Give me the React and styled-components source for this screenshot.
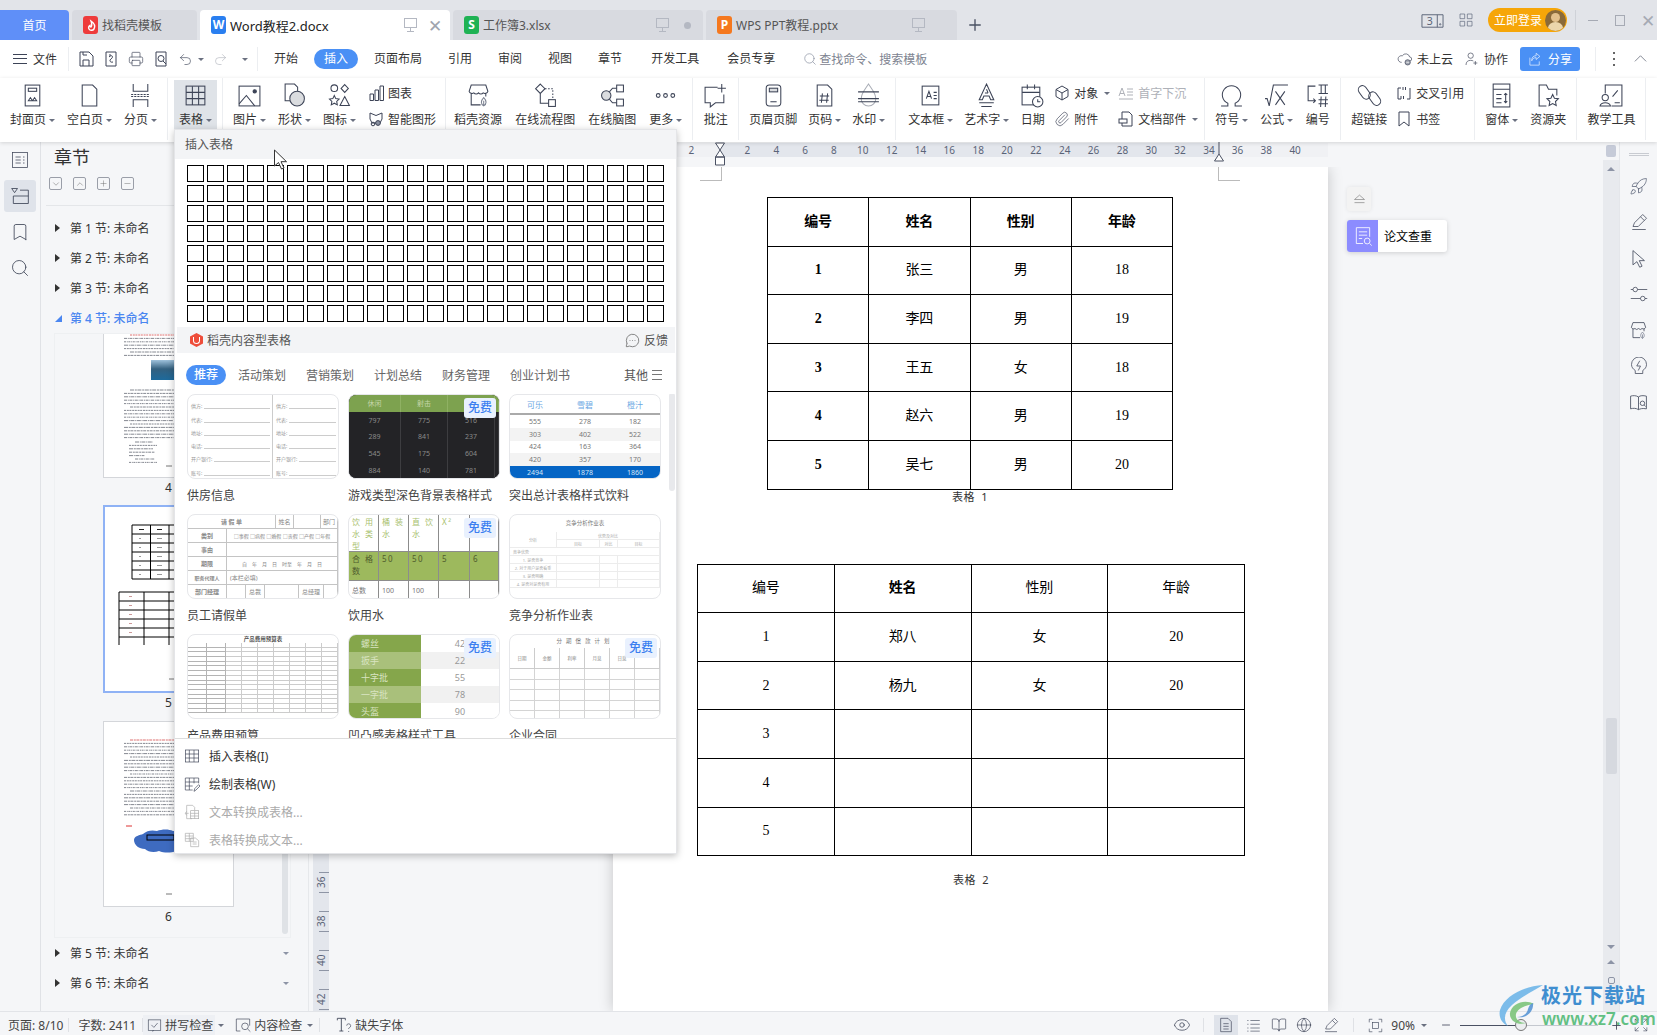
import React from 'react';
import styled, { createGlobalStyle } from 'styled-components';
import { Rocket, Eye, Globe, Search, Undo2, Redo2, Printer, Paperclip, Bookmark, Plus, Minus, BookOpen, MessageCircleMore, ChevronDown, ChevronUp } from 'lucide-react';

const FONT = `"Noto Sans", "Noto Sans CJK SC", sans-serif`;
const DOC_FONT = `"Liberation Serif", serif`;
const CN_FONT = `"Noto Sans CJK SC", sans-serif`;
const INK = '#3c4356';

const GlobalStyle = createGlobalStyle`
  html, body { margin: 0; padding: 0; background: #f5f6f8; overflow: hidden; }
  * { box-sizing: border-box; }
  body { font-family: ${FONT}; font-size: 12px; color: #333; }
`;

const Shell = styled.div`
  position: relative;
  width: 1657px;
  height: 1035px;
  display: flex;
  flex-direction: column;
  overflow: hidden;
`;
const Gap = styled.span`
  width: ${(p) => p.$w}px;
  flex-shrink: 0;
`;

/* drawn icons */
const Svg = styled.svg.attrs((p) => ({ viewBox: p.$box || '0 0 24 24', fill: 'none' }))`
  width: ${(p) => p.$s || 24}px;
  height: ${(p) => p.$s || 24}px;
  stroke: ${(p) => p.$c || INK};
  stroke-width: ${(p) => p.$w || 1};
  flex-shrink: 0;
  text { stroke: none; fill: ${(p) => p.$c || INK}; font-family: ${FONT}; }
`;

const ICONS = {
  cover: <><rect x="5" y="2" width="14" height="20" /><rect x="8" y="5" width="8" height="3" /><path d="M8 17l2-3 2 3zM12 17l2-3 2 3z" /></>,
  blank: <path d="M5 2h10l4 4v16H5z" />,
  pagebreak: <><path d="M5 1v7h14V1M5 23v-7h14v7" /><path d="M3 11h18" strokeDasharray="2 1" /><path d="M3 13h18" strokeDasharray="2 1" /></>,
  table: <><rect x="3" y="3" width="18" height="18" /><path d="M3 9h18M3 15h18M9 3v18M15 3v18" /></>,
  picture: <><rect x="2" y="3" width="20" height="19" /><path d="M2 20l7-8 8 10" /><circle cx="17" cy="8" r="1.6" fill={INK} /></>,
  shape: <><path d="M8 17H3V1h9l3 3v4" /><circle cx="14.5" cy="15" r="7" fill="#dadcdf" /></>,
  iconset: <><circle cx="7" cy="5" r="3.2" /><path d="M17 1.5l3.5 3.7L17 9l-3.5-3.8z" /><path d="M7 12l1.4 3 3.2.4-2.3 2.3.6 3.3L7 19.4 4.1 21l.6-3.3-2.3-2.3 3.2-.4zM17 13l4.5 8.5h-9z" /></>,
  chart: <path d="M2 9h3.5v6.5H2zM7 5h3.5v10.5H7zM12 1h3.5v14.5H12z" />,
  smart: <><path d="M2 2l6 2.5L14 2v6l-2 4H4L2 8z" /><circle cx="10" cy="12" r="2.4" fill="#8a90a0" /><circle cx="5" cy="13" r="1.8" /></>,
  shop: <><path d="M5 10v11h9M19 10v3M3 8l2-6h14l2 6a3 3 0 0 1-4.5 1.5A3 3 0 0 1 12 9.5a3 3 0 0 1-4.5 0A3 3 0 0 1 3 8z" /><path d="M17 22c-3-2-3-5 0-8 3 3 3 6 0 8zM17 22v-5" stroke="#7a8090" /></>,
  flow: <><path d="M7 1l4.500 4.500L7 10 2.500 5.500z" /><rect x="15" y="16" width="6.500" height="6.500" /><path d="M11.500 5.500H19V16" strokeDasharray="1.500 1.500" /><path d="M7 10v9.500h8" /></>,
  mind: <><circle cx="6" cy="12" r="4.500" fill="#dadcdf" /><rect x="16" y="2" width="6.500" height="6.500" /><rect x="16" y="15.500" width="6.500" height="6.500" /><path d="M9 8.500l3-3.500h4M9 15.500l3 3.500h4" /></>,
  more: <><circle cx="5" cy="12" r="1.800" /><circle cx="12" cy="12" r="1.800" /><circle cx="19" cy="12" r="1.800" /></>,
  comment: <path d="M14 4H2v15h5v4l5-4h8v-8M18 1v8M14 5h8" />,
  header: <><rect x="5" y="2" width="14" height="20" rx="3" /><rect x="8" y="5" width="8" height="3.500" fill="#dadcdf" /><path d="M9 18h6" /></>,
  pagenum: <><path d="M5 2h10l4 4v16H5z" /><path d="M10 10l-1 9M15 10l-1 9M7.500 12.500h9M7 16.500h9" /></>,
  watermark: <><path d="M12 1c4 6 7 9 7 14a7 7 0 0 1-14 0c0-5 3-8 7-14z" stroke="#a9adb6" /><path d="M2 8.500h20M2 15h20M2 18h20" /></>,
  textbox: <><rect x="4" y="3" width="16" height="18" /><path d="M8 15l2.500-7 2.500 7M9 13h3M15 9h3M15 12h3M15 15h3" /></>,
  art: <><path d="M12 1l7 15h-3l-1.500-3.500h-5L8 16H5zM10.500 9.500h3M12 6l1.500 3.500" /><path d="M5 19h14M7 22.500h10" /></>,
  date: <><rect x="2" y="4" width="17" height="17" /><path d="M2 9h17M7 1.500V6M14 1.500V6" /><circle cx="17" cy="18" r="5" fill="#fff" /><path d="M17 15.500V18h2.500" /></>,
  object: <><path d="M8 1l6 3.500v7L8 15l-6-3.500v-7z" /><path d="M2 4.500L8 8l6-3.500M8 8v7" /></>,
  dropcap: <path d="M1 11l3-8 3 8M2 8.500h4M9 4h6M9 7h6M9 10h6M1 14h14" />,
  docpart: <><path d="M4 8V1h7l3 3v11H4v-3" /><rect x="1" y="8" width="8" height="4" /></>,
  omega: <path d="M2 22h6.500v-2.500a8.800 8.800 0 1 1 7 0V22H22" />,
  formula: <path d="M1 15h2l2 7 4-20h14M11 8l9 13M20 8l-9 13" />,
  numbering: <path d="M10 3H3v14h7M8 15l2 2-2 2M13 2h9M13 10h9M15.500 2v8M19.500 2v8M15.500 13l-.5 10M20 13l-.5 10M13 16h9M13 20h9" />,
  link: <><rect x="3" y="2" width="8" height="14" rx="4" transform="rotate(-35 7 9)" /><rect x="13" y="8" width="8" height="14" rx="4" transform="rotate(-35 17 15)" /></>,
  crossref: <path d="M5 3H2v11h3M11 14h3V3M7 2v3M9.500 2v3M5 11v3M7.500 11v3" />,
  mark: <path d="M3 1h10v14l-5-4-5 4z" />,
  form: <><rect x="4" y="1" width="16" height="22" /><path d="M4 6h16M7 11h5M7 15h5M7 19h5M16 10v9M14.500 11.500L16 10l1.500 1.500M14.500 17.500L16 19l1.500-1.500" /></>,
  folderstar: <path d="M10 22H3V2h7l2 4h8v6M16 11l1.700 3.600 3.800.5-2.800 2.700.7 3.800-3.400-1.900-3.400 1.900.7-3.800-2.800-2.700 3.800-.5z" />,
  teach: <><path d="M6 10V2h16v20H12" /><circle cx="6" cy="14" r="3" /><path d="M1 22c1-4 9-4 10 0zM13 13l5-6M15 19h5" /></>,
  save: <><path d="M2 1h9l4 4v10H2z" /><path d="M5 15V9h6v6M5 1v3h4" /></>,
  saveas: <><path d="M3 1h10v14H3z" /><path d="M6 6c3-3 5 0 2 2-2 1-1 4 2 3M6 4h2" /></>,
  preview: <><path d="M3 1h10v14H3z" /><circle cx="8" cy="7.500" r="3" /><path d="M10 10l3 3" /></>,
  listdoc: <><rect x="2" y="2" width="20" height="20" /><path d="M6 8h7M6 12h7M6 16h7M16 8h2M16 12h2M16 16h2" /></>,
  section: <><path d="M2 3h7l-3.500 5z" /><path d="M12 5h10v16H4V12h18" /></>,
  cloud: <><path d="M7 17a5 5 0 1 1 1-9.800A6 6 0 0 1 19 9a3 3 0 0 1 0 6" /><circle cx="16" cy="17" r="4" fill="#a0a5b0" /><path d="M14 17h4" stroke="#fff" /></>,
  people: <><circle cx="10" cy="7" r="4" /><path d="M3 21c0-5 3-7 7-7 1.500 0 3 .5 4 1M17 15v6M14 18h6" /></>,
  share: <path d="M13 2l6 5-6 5V9c-4 0-6 2-7 5 0-5 2-8 7-8zM3 9v12h15v-6" />,
  collapse: <path d="M3 15l9-9 9 9" />,
  insert: <><rect x="2" y="3" width="20" height="18" /><path d="M2 9h20M2 15h20M8 3v18M15 3v18" /></>,
  draw: <><path d="M13 21H2V3h20v8M2 9h20M2 15h11M8 3v18M15 3v8" /><path d="M15 23l1-4 6-6 2 2-6 6z" /></>,
  text2table: <><path d="M12 22H4V2h9l3 3v4M2 14h5M4 11l-2 3 2 3" /><rect x="10" y="10" width="12" height="12" /><path d="M10 14h12M10 18h12M16 10v12" /></>,
  table2text: <><path d="M2 2h12v12H2zM2 6h12M2 10h12M8 2v12" /><path d="M10 9h7l5 4v9H10zM13 15h6M13 18h6" /></>,
  spell: <><rect x="2" y="3" width="20" height="17" /><path d="M8 21l3-1M7 11l4 4 6-7" /></>,
  inspect: <><path d="M8 21H2V3h20v10" /><circle cx="15" cy="14" r="5" /><path d="M19 18l4 4" /></>,
  viewdoc: <><path d="M4 2h11l5 5v15H4z" /><path d="M8 10h8M8 14h8M8 18h8" /></>,
  outline: <path d="M2 4h2M7 4h15M2 10h2M7 10h15M2 16h2M7 16h15M2 21h2M7 21h15" />,
  pen: <path d="M3 22h18M4 18l2-5L17 2l5 5-11 11zM14 5l5 5" />,
  fit: <><path d="M2 7V2h5M17 2h5v5M22 17v5h-5M7 22H2v-5" /><rect x="7" y="7" width="10" height="10" /></>,
  expand: <path d="M2 8V2h6M2 2l6 6M22 8V2h-6M22 2l-6 6M2 16v6h6M2 22l6-6M22 16v6h-6M22 22l-6-6" />,
  sliders: <><path d="M1 6h3M10 6h13M1 18h13M20 18h3" /><circle cx="7" cy="6" r="3" /><circle cx="17" cy="18" r="3" /></>,
  missing: <><path d="M2 5V2h12v3M8 2v19M5 21h6" strokeWidth="1.3" /><path d="M16 13a3 3 0 1 1 4 3c-1 .5-1 1-1 2M19 21v1.500" /></>,
  dual: <><path d="M1 6h22v13H1zM17 6v13" /><text x="6" y="17" fontSize="11">3</text><circle cx="20" cy="16" r=".7" /></>,
  apps: <path d="M3 3h7v7H3zM14 3h7v7h-7zM3 14h7v7H3zM14 14h7v7h-7z" />,
  paper: <><path d="M12 21H4V2h16v11M7 7h10M7 11h10M7 15h4" /><circle cx="17" cy="18" r="3.500" /><path d="M20 21l2.500 2.500" /></>,
  eject: <path d="M12 5l8 7H4zM4 17h16" />,
  pointer: <path d="M5 2v18l5-4 3.500 7 3-1.300-3.500-7h6.500z" />,
  bulb: <path d="M7 18c-3-2-5-4.500-5-8a10 10 0 0 1 20 0c0 3.500-2 6-5 8v4H7zM13 5l-4 7h5l-3 6" />,
  guide: <><path d="M12 5C9 3 5 3 2 4v16c3-1 7-1 10 1 2-1 5-2 10-1V4c-4-1-8-1-10 1zM12 5v16" /><circle cx="17" cy="13" r="2.800" /><path d="M19 15l2 2" /></>,
  leaf: <path d="M7 3c3 2 5 4 3 8-1 1.500-4 2-5 0-1-1.500 0-3 1-3.500 0 1 .5 1.500 1 1.500 1-1 1-3 0-6z" />,
};

const Ico = ({ name, size, color, stroke, box }) => (
  <Svg $s={size} $c={color} $w={stroke} $box={box}>{ICONS[name]}</Svg>
);

/* title tabs */
const TabBar = styled.div`
  height: 40px;
  flex-shrink: 0;
  background: #e2e4e9;
  display: flex;
  align-items: flex-end;
  gap: 3px;
`;
const HomeTab = styled.div`
  width: 69px;
  height: 30px;
  background: #5f8ff8;
  color: #fff;
  border-radius: 0 4px 0 0;
  display: flex;
  align-items: center;
  justify-content: center;
`;
const Tab = styled.div`
  width: ${(p) => p.$w}px;
  height: 30px;
  border-radius: 4px 4px 0 0;
  background: ${(p) => (p.$active ? '#fff' : '#d8dae0')};
  color: ${(p) => (p.$active ? '#222' : '#555')};
  font-size: ${(p) => (p.$active ? 13 : 12)}px;
  display: flex;
  align-items: center;
  padding: 0 7px 0 11px;
  gap: 4px;
`;
const AppBadge = styled.span`
  width: 15px;
  height: 18px;
  border-radius: 3px;
  background: ${(p) => p.$bg};
  color: #fff;
  font-size: 12px;
  font-weight: 700;
  line-height: 18px;
  text-align: center;
  flex-shrink: 0;
  display: flex;
  align-items: center;
  justify-content: center;
`;
const TabSpacer = styled.span`flex: 1;`;
const PinBox = styled.span`
  width: 13px;
  height: 10px;
  border: 1px solid #b4b8c2;
  margin-right: ${(p) => p.$gap || 0}px;
  margin-bottom: 4px;
  position: relative;
  &::after { content: ''; position: absolute; left: 2px; right: 2px; top: 12px; border-top: 1px solid #b4b8c2; }
  &::before { content: ''; position: absolute; left: 5px; top: 9px; height: 3px; border-left: 1px solid #b4b8c2; }
`;
const Close = styled.span`
  color: ${(p) => p.$c || '#a0a4ae'};
  font-size: 17px;
  line-height: 1;
  width: ${(p) => p.$w || 16}px;
  text-align: center;
  display: flex;
  justify-content: center;
`;
const Dot = styled.span`
  width: 7px;
  height: 7px;
  border-radius: 50%;
  background: #b4b8c2;
  margin: 0 5px;
`;
const AddTab = styled.div`
  margin: 0 0 0 6px;
  height: 30px;
  display: flex;
  align-items: center;
  color: #4a5163;
`;
const WinArea = styled.div`
  margin-left: auto;
  height: 40px;
  display: flex;
  align-items: center;
  padding-right: 3px;
`;
const LoginBtn = styled.div`
  width: 79px;
  height: 24px;
  margin: 0 8px 0 14px;
  border-radius: 12px;
  background: #f6a609;
  color: #fff;
  display: flex;
  align-items: center;
  justify-content: space-between;
  padding: 0 1px 0 6px;
`;
const Avatar = styled.span`
  width: 21px;
  height: 21px;
  border-radius: 50%;
  background: #8a6a3a;
  position: relative;
  overflow: hidden;
  &::before { content: ''; position: absolute; left: 6px; top: 3px; width: 9px; height: 9px; border-radius: 50%; background: #e3c08c; }
  &::after { content: ''; position: absolute; left: 3px; top: 12px; width: 15px; height: 12px; border-radius: 50%; background: #ecd6ac; }
`;
const WinSep = styled.span`
  width: 1px;
  height: 20px;
  background: #cfd2d8;
  margin-right: 12px;
`;
const WinBtn = styled.span`
  width: 10px;
  height: ${(p) => p.$h}px;
  border: 1px solid #a6aab4;
  border-width: ${(p) => (p.$line ? '1px 0 0' : '1px')};
  margin-right: 17px;
`;

/* menu row */
const MenuRow = styled.div`
  height: 38px;
  flex-shrink: 0;
  background: #fff;
  display: flex;
  align-items: center;
  padding-left: 13px;
`;
const Burger = styled.span`
  width: ${(p) => p.$s || 14}px;
  height: 10px;
  border-top: 1px solid ${(p) => p.$c || INK};
  border-bottom: 1px solid ${(p) => p.$c || INK};
  position: relative;
  margin-right: ${(p) => p.$m ?? 6}px;
  &::after { content: ''; position: absolute; left: 0; right: 0; top: 3px; border-top: 1px solid ${(p) => p.$c || INK}; }
`;
const RowSep = styled.span`
  width: 1px;
  height: 24px;
  background: #eceef1;
  margin: ${(p) => p.$m || '0 9px'};
`;
const QuickIcons = styled.div`
  display: flex;
  align-items: center;
  gap: 9px;
`;
const Caret = styled.span`
  display: inline-block;
  flex-shrink: 0;
  width: 0;
  height: 0;
  border: 3px solid transparent;
  border-top: 3.500px solid ${(p) => p.$c || '#6a7080'};
  border-bottom: 0;
  margin-left: ${(p) => (p.$push ? 'auto' : `${p.$m ?? 3}px`)};
`;
const NavList = styled.div`
  display: flex;
  align-items: center;
  gap: 26px;
  margin-left: 16px;
`;
const NavItem = styled.span`
  color: ${(p) => (p.$active ? '#fff' : '#333')};
  background: ${(p) => (p.$active ? '#4a90f5' : 'transparent')};
  height: 20px;
  line-height: 20px;
  border-radius: 10px;
  padding: ${(p) => (p.$active ? '0 10px' : '0')};
  margin: ${(p) => (p.$active ? '0 -10px' : `0 0 0 ${p.$extra || 0}px`)};
`;
const SearchHint = styled.span`
  display: flex;
  align-items: center;
  gap: 2px;
  color: #7d8390;
  margin-left: 28px;
`;
const RightTools = styled.div`
  margin-left: auto;
  display: flex;
  align-items: center;
  padding-right: 9px;
`;
const ToolText = styled.span`
  display: flex;
  align-items: center;
  gap: 4px;
  margin-right: ${(p) => p.$m || 0}px;
`;
const ShareBtn = styled.span`
  width: 60px;
  height: 24px;
  background: #4a90f5;
  border-radius: 3px;
  color: #fff;
  display: flex;
  align-items: center;
  justify-content: center;
  gap: 5px;
`;
const Kebab = styled.span`
  width: 2px;
  height: 14px;
  margin: 0 18px 0 0;
  background: repeating-linear-gradient(#666 0 2px, transparent 2px 6px);
`;

/* ribbon */
const Ribbon = styled.div`
  height: 64px;
  flex-shrink: 0;
  background: #fff;
  display: flex;
  align-items: flex-start;
  position: relative;
  z-index: 3;
  box-shadow: 0 1px 4px rgba(0, 0, 0, 0.14);
`;
const Group = styled.div`
  height: 62px;
  display: flex;
  align-items: flex-start;
  gap: ${(p) => p.$gap ?? 12}px;
  padding: 2px ${(p) => p.$r ?? 10}px 0 ${(p) => p.$l ?? 10}px;
  border-right: 1px solid #eceef1;
`;
const RibbonBtn = styled.div`
  display: flex;
  flex-direction: column;
  align-items: center;
  height: 50px;
  width: ${(p) => (p.$w ? `${p.$w}px` : 'auto')};
  background: ${(p) => (p.$on ? '#dfe3e8' : 'transparent')};
  color: #333;
`;
const RibbonIcon = styled.span`
  height: 31px;
  display: flex;
  align-items: center;
  justify-content: center;
`;
const RibbonLabel = styled.span`
  display: flex;
  align-items: center;
  white-space: nowrap;
  line-height: 18px;
`;
const SideCol = styled.div`
  display: flex;
  flex-direction: column;
  gap: 8px;
  padding-top: 4px;
  margin-left: ${(p) => p.$ml || 0}px;
`;
const SideItem = styled.div`
  height: 18px;
  display: flex;
  align-items: center;
  gap: 4px;
  white-space: nowrap;
  color: ${(p) => (p.$off ? '#aeb1b8' : '#333')};
`;

const Btn = ({ icon, label, caret, size, on, w }) => (
  <RibbonBtn $on={on} $w={w}>
    <RibbonIcon><Ico name={icon} size={size || 25} /></RibbonIcon>
    <RibbonLabel>{label}{caret && <Caret />}</RibbonLabel>
  </RibbonBtn>
);
const Side = ({ icon, label, caret, off }) => (
  <SideItem $off={off}>
    <Ico name={icon} size={16} box="0 0 16 16" color={off ? '#aeb1b8' : INK} />
    {label}{caret && <Caret $m={2} />}
  </SideItem>
);

/* main */
const Main = styled.div`
  flex: 1;
  min-height: 0;
  display: flex;
`;
const LeftRail = styled.div`
  width: 41px;
  flex-shrink: 0;
  background: #f5f6f8;
  border-right: 1px solid #e0e2e6;
  display: flex;
  flex-direction: column;
  align-items: center;
  padding-top: 2px;
  gap: 4px;
`;
const RailBtn = styled.div`
  width: 32px;
  height: 32px;
  border-radius: 3px;
  background: ${(p) => (p.$on ? '#dfe3ea' : 'transparent')};
  display: flex;
  align-items: center;
  justify-content: center;
`;
const SidePanel = styled.div`
  width: 268px;
  flex-shrink: 0;
  background: #f5f6f8;
  border-right: 1px solid #e6e8eb;
  display: flex;
  flex-direction: column;
`;
const PanelTitle = styled.div`
  font-size: 18px;
  line-height: 28px;
  padding: 1px 0 0 13px;
  color: #333;
`;
const PanelTools = styled.div`
  display: flex;
  gap: 11px;
  padding: 6px 0 0 8px;
  height: 27px;
`;
const SquareBtn = styled.span`
  width: 13px;
  height: 13px;
  border: 1px solid #9a9ea8;
  border-radius: 2px;
  color: #666;
  display: flex;
  align-items: center;
  justify-content: center;
`;
const PanelRule = styled.div`
  margin: 7px 0 7px 5px;
  border-top: 1px solid #e4e6e9;
`;
const SectionRow = styled.div`
  height: 30px;
  flex-shrink: 0;
  display: flex;
  align-items: center;
  padding: 0 19px 0 14px;
  color: ${(p) => (p.$active ? '#4a86f0' : '#333')};
  font-weight: ${(p) => (p.$active ? 500 : 400)};
`;
const Arrow = styled.span`
  width: 0;
  height: 0;
  margin-right: 10px;
  border-left: 5px solid #333;
  border-top: 4px solid transparent;
  border-bottom: 4px solid transparent;
`;
const ArrowOpen = styled.span`
  width: 0;
  height: 0;
  margin-right: 8px;
  border-right: 7px solid #4a86f0;
  border-top: 7px solid transparent;
`;
const ThumbBox = styled.div`
  height: 605px;
  flex-shrink: 0;
  margin-left: 13px;
  margin-right: 17px;
  border: 1px solid #eef0f2;
  position: relative;
  display: flex;
  flex-direction: column;
  padding-left: 48px;
`;
const ThumbPage = styled.div`
  width: ${(p) => (p.$on ? 132 : 131)}px;
  height: ${(p) => p.$h}px;
  background: #fff;
  border: ${(p) => (p.$on ? '2px solid #8fb2f5' : '1px solid #d4d6da')};
  border-top-width: ${(p) => (p.$open ? 0 : undefined)};
  svg { display: block; }
`;
const ThumbNo = styled.div`
  width: 131px;
  height: ${(p) => p.$h}px;
  text-align: center;
  line-height: 20px;
  color: #333;
`;
const ThumbScroll = styled.span`
  position: absolute;
  right: 2px;
  bottom: 3px;
  width: 6px;
  height: 400px;
  border-radius: 3px;
  background: #dfe2e6;
`;
const VRuler = styled.div`
  width: 20px;
  flex-shrink: 0;
  background: #f5f6f8;
  padding-left: 4px;
  overflow: hidden;
`;
const VBand = styled.div`
  height: 100%;
  background: #e3e6ec;
  display: flex;
  flex-direction: column;
  justify-content: flex-end;
`;
const VBlock = styled.div`
  height: 39px;
  margin-bottom: ${(p) => (p.$last ? -17 : 0)}px;
  flex-shrink: 0;
  position: relative;
  font-size: 10px;
  color: #5b6478;
  &::before, &::after { content: ''; position: absolute; left: 6px; right: 0; border-top: 1px solid #8e95a5; }
  &::before { top: 0; }
  &::after { top: 20px; }
  span { position: absolute; top: 1px; left: 2px; height: 19px; line-height: 12px; writing-mode: vertical-rl; transform: rotate(180deg); text-align: center; }
`;
const Workspace = styled.div`
  flex: 1;
  min-width: 0;
  display: flex;
  flex-direction: column;
  position: relative;
  background: #f5f6f8;
`;
const HRuler = styled.div`
  height: 25px;
  flex-shrink: 0;
  padding: 1px 0 0 284px;
  display: flex;
  align-items: flex-start;
  position: relative;
  z-index: 2;
  background: #f5f6f8;
  font-size: 10px;
  color: #5b6478;
`;
const RulerSeg = styled.div`
  height: 14px;
  width: ${(p) => p.$w}px;
  background: ${(p) => p.$bg};
  padding-left: ${(p) => p.$pad}px;
  display: flex;
  flex-shrink: 0;
`;
const RulerNo = styled.span`
  width: 28.85px;
  flex-shrink: 0;
  text-align: center;
  line-height: 14px;
`;
const RulerMark = styled.svg.attrs({ fill: 'none' })`
  position: absolute;
  top: 0;
  left: ${(p) => p.$x}px;
  stroke: #4a5163;
`;
const DocScroll = styled.div`
  flex: 1;
  min-height: 0;
  overflow: hidden;
  position: relative;
`;
const Page = styled.div`
  width: 715px;
  height: 100%;
  margin-left: 284px;
  padding-top: 30px;
  background: #fff;
  box-shadow: 0 0 14px rgba(0, 0, 0, 0.2);
  position: relative;
`;
const CropMark = styled.span`
  position: absolute;
  top: 0;
  width: 22px;
  height: 14px;
  left: ${(p) => p.$x}px;
  border-bottom: 1px solid #bbb;
  ${(p) => (p.$right ? 'border-left' : 'border-right')}: 1px solid #bbb;
`;
const TableBlock = styled.div`
  margin: ${(p) => p.$top || 0}px 0 0 ${(p) => p.$left}px;
  width: ${(p) => p.$w}px;
`;
const DocTable = styled.table`
  border-collapse: collapse;
  table-layout: fixed;
  width: 100%;
  color: #000;
  tr { height: 48.600px; }
`;
const DocCell = styled.td`
  border: 1px solid #000;
  text-align: center;
  padding: 0 0 ${(p) => (p.$cn ? 4 : 0)}px;
  vertical-align: middle;
  line-height: 1;
  font-size: 14px;
  font-family: ${(p) => (p.$cn ? CN_FONT : DOC_FONT)};
  font-weight: ${(p) => (p.$b ? 700 : 400)};
`;
const Caption = styled.div`
  margin-top: ${(p) => p.$gap}px;
  text-align: center;
  line-height: 16px;
  font-size: 11px;
  color: #333;
  letter-spacing: 0.5px;
  word-spacing: 3px;
`;
const FloatEject = styled.div`
  position: absolute;
  left: 1018px;
  top: 20px;
  width: 24px;
  height: 24px;
  background: #f3f3f3;
  border-radius: 3px;
  box-shadow: 0 0 4px rgba(0, 0, 0, 0.08);
  display: flex;
  align-items: center;
  justify-content: center;
`;
const FloatCard = styled.div`
  position: absolute;
  left: 1018px;
  top: 53px;
  width: 100px;
  height: 32px;
  background: #fff;
  border-radius: 3px;
  box-shadow: 0 1px 5px rgba(0, 0, 0, 0.16);
  display: flex;
  align-items: center;
  gap: 6px;
  color: #000;
  overflow: hidden;
`;
const FloatIcon = styled.span`
  width: 31px;
  height: 32px;
  background: #8c8cff;
  display: flex;
  align-items: center;
  justify-content: center;
`;
const VScroll = styled.div`
  width: 16px;
  flex-shrink: 0;
  background: #e8eaee;
  display: flex;
  flex-direction: column;
  align-items: center;
`;
const VScrollTop = styled.div`
  width: 100%;
  height: 18px;
  background: #f5f6f8;
  display: flex;
  align-items: center;
  justify-content: center;
`;
const SplitBox = styled.span`
  width: 10px;
  height: 12px;
  border-radius: 2px;
  background: #c6cbd8;
`;
const ScrollArrow = styled.span`
  width: 0;
  height: 0;
  margin-top: ${(p) => p.$m}px;
  border-left: 4px solid transparent;
  border-right: 4px solid transparent;
  ${(p) => (p.$down ? 'border-top' : 'border-bottom')}: 4px solid #8d94a6;
`;
const ScrollThumb = styled.span`
  width: 11px;
  height: 56px;
  margin-top: ${(p) => p.$m}px;
  border-radius: 2px;
  background: #d6d9df;
`;
const ScrollRing = styled.span`
  width: 7px;
  height: 7px;
  margin-top: ${(p) => p.$m}px;
  border: 1px solid #8d94a6;
  border-radius: 2px;
`;
const RightRail = styled.div`
  width: 38px;
  flex-shrink: 0;
  background: #f5f6f8;
  border-left: 1px solid #e4e6ea;
  display: flex;
  flex-direction: column;
  align-items: center;
  padding-top: 11px;
`;
const Grip = styled.span`
  width: 20px;
  height: 3px;
  border-top: 1px solid #c8cbd1;
  border-bottom: 1px solid #c8cbd1;
  margin-bottom: 12px;
`;
const RailIcon = styled.span`
  height: 36px;
  flex-shrink: 0;
  display: flex;
  align-items: center;
  justify-content: center;
`;

/* status bar */
const StatusBar = styled.div`
  height: 24px;
  flex-shrink: 0;
  background: #f5f6f8;
  border-top: 1px solid #e2e4e8;
  display: flex;
  align-items: center;
  padding: 3px 0 0 8px;
  color: #444;
`;
const StatusText = styled.span`
  white-space: nowrap;
`;
const StatusSep = styled.span`
  width: 1px;
  height: 14px;
  background: #dfe1e5;
  margin: ${(p) => p.$m};
`;
const StatusBtn = styled.span`
  display: flex;
  align-items: center;
  height: 100%;
  gap: 3px;
  padding: 0 ${(p) => p.$pr ?? 2}px 0 ${(p) => p.$pl ?? 4}px;
  background: ${(p) => (p.$on ? '#eef0f4' : 'transparent')};
`;
const StatusRight = styled.div`
  margin-left: auto;
  height: 100%;
  display: flex;
  align-items: center;
  padding-right: 9px;
`;
const ViewBtn = styled.span`
  width: ${(p) => p.$w || 24}px;
  height: 100%;
  background: ${(p) => (p.$on ? '#dfe3ea' : 'transparent')};
  display: flex;
  align-items: center;
  justify-content: center;
`;
const Slider = styled.span`
  width: 138px;
  height: 1px;
  margin: 0 12px 0 8px;
  background: linear-gradient(90deg, #4a5163 0 56px, #c4c8cf 56px);
  position: relative;
`;
const SliderKnob = styled.span`
  position: absolute;
  left: 55px;
  top: -6px;
  width: 12px;
  height: 12px;
  border-radius: 50%;
  border: 1px solid #777;
  background: #eceef0;
`;

/* insert-table dropdown */
const Dropdown = styled.div`
  position: absolute;
  left: 174px;
  top: 129px;
  width: 503px;
  height: 725px;
  background: #fff;
  border: 1px solid #e4e5e8;
  box-shadow: 0 2px 7px rgba(0, 0, 0, 0.25);
  z-index: 5;
  display: flex;
  flex-direction: column;
`;
const DropHead = styled.div`
  height: 29px;
  flex-shrink: 0;
  background: #f3f4f6;
  line-height: 29px;
  padding-left: 10px;
  color: #555;
`;
const CellGrid = styled.div`
  display: grid;
  grid-template-columns: repeat(24, 17px);
  grid-auto-rows: 17px;
  gap: 3px;
  padding: 6px 0 0 12px;
  flex-shrink: 0;
`;
const GridCell = styled.span`
  border: 1px solid #000;
`;
const Banner = styled.div`
  height: 26px;
  flex-shrink: 0;
  margin: 5px 1px 0 2px;
  background: #f3f4f6;
  display: flex;
  align-items: center;
  padding: 0 7px 0 13px;
  color: #555;
`;
const HexLogo = styled.span`
  width: 13px;
  height: 14px;
  margin-right: 4px;
  background: #ee4d3a;
  clip-path: polygon(50% 0, 100% 25%, 100% 75%, 50% 100%, 0 75%, 0 25%);
  display: flex;
  align-items: center;
  justify-content: center;
  &::after { content: ''; width: 5px; height: 6px; border: 1.500px solid #fff; border-top: 0; border-radius: 0 0 4px 4px; }
`;
const Feedback = styled.span`
  margin-left: auto;
  display: flex;
  align-items: center;
  gap: 4px;
`;
const CatRow = styled.div`
  height: 20px;
  margin-top: 12px;
  flex-shrink: 0;
  display: flex;
  align-items: center;
  padding: 0 9px 0 11px;
  color: #666;
`;
const CatPill = styled.span`
  width: 40px;
  height: 20px;
  border-radius: 10px;
  background: #4a90f5;
  color: #fff;
  line-height: 20px;
  text-align: center;
  font-weight: 500;
  margin-right: 12px;
`;
const Cat = styled.span`
  width: 68px;
`;
const CatOther = styled.span`
  margin-left: auto;
  display: flex;
  align-items: center;
  gap: 4px;
  color: #555;
  margin-right: 5px;
`;
const TemplateArea = styled.div`
  flex: 1;
  min-height: 0;
  margin-top: 9px;
  overflow: hidden;
  position: relative;
  padding-left: 12px;
`;
const TemplateGrid = styled.div`
  display: grid;
  grid-template-columns: repeat(3, 152px);
  column-gap: 9px;
  grid-auto-rows: 120px;
`;
const Template = styled.div`
  display: flex;
  flex-direction: column;
`;
const TemplateName = styled.div`
  margin-top: 8px;
  line-height: 18px;
  color: #444;
  white-space: nowrap;
`;
const Thumb = styled.div`
  height: 85px;
  border: 1px solid #e6e7ea;
  border-radius: 8px;
  overflow: hidden;
  position: relative;
  background: ${(p) => p.$bg || '#fff'};
  color: #888;
  font-size: 6px;
`;
const FreeTag = styled.span`
  position: absolute;
  top: 3px;
  right: 3px;
  width: 32px;
  height: 20px;
  border-radius: 3px;
  background: #e9f1fe;
  color: #3b7ff0;
  font-size: 12px;
  font-weight: 500;
  line-height: 20px;
  text-align: center;
`;
const TemplateScroll = styled.span`
  position: absolute;
  top: -1px;
  right: 1px;
  width: 6px;
  height: 98px;
  border-radius: 3px;
  background: #e8e9ec;
`;
const MiniGrid = styled.div`
  display: grid;
  grid-template-columns: ${(p) => p.$cols};
  grid-template-rows: ${(p) => p.$head || 'none'};
  grid-auto-rows: ${(p) => p.$rows};
  color: ${(p) => p.$c || 'inherit'};
`;
const MiniCell = styled.div`
  display: flex;
  align-items: center;
  justify-content: ${(p) => p.$align || 'center'};
  padding: ${(p) => (p.$align ? '0 3px' : 0)};
  background: ${(p) => p.$bg || 'transparent'};
  color: ${(p) => p.$c || 'inherit'};
  font-size: ${(p) => p.$size || 6}px;
  font-weight: ${(p) => (p.$b ? 700 : 400)};
  white-space: nowrap;
  overflow: hidden;
  border-right: ${(p) => (p.$line || p.$vline ? `1px solid ${p.$line || p.$vline}` : 'none')};
  border-bottom: ${(p) => (p.$line || p.$under ? `${p.$under ? 2 : 1}px solid ${p.$under || p.$line}` : 'none')};
  grid-column: ${(p) => (p.$span ? `span ${p.$span}` : 'auto')};
  grid-row: ${(p) => (p.$rspan ? `span ${p.$rspan}` : 'auto')};
`;
const WaterHead = styled(MiniCell)`
  white-space: pre;
  align-items: flex-start;
  justify-content: flex-start;
  padding: 1px 0 0 3px;
  line-height: 12px;
  letter-spacing: 1.500px;
`;
const ToolName = styled(MiniCell)`
  padding-left: 12px;
`;
const MiniTitle = styled.div`
  height: ${(p) => p.$h || 11}px;
  text-align: center;
  line-height: ${(p) => p.$h || 11}px;
  font-size: 5.500px;
  letter-spacing: ${(p) => p.$gap || 0}px;
  color: ${(p) => (p.$strong ? '#555' : '#777')};
  font-weight: ${(p) => (p.$strong ? 700 : 400)};
`;
const FormSplit = styled.div`
  display: grid;
  grid-template-columns: 85px 1fr;
  height: 100%;
`;
const FormCol = styled.div`
  padding: 2px 0 0 3px;
  border-right: ${(p) => (p.$line ? '1px solid #ccc' : 'none')};
`;
const FormLine = styled.div`
  height: 13.300px;
  display: flex;
  align-items: flex-end;
  gap: 2px;
  font-size: 5px;
  line-height: 7px;
  color: #999;
  padding-right: 2px;
  &::after { content: ''; flex: 1; border-bottom: 1px solid #ccc; margin-bottom: 1px; }
`;
const DropFooter = styled.div`
  flex-shrink: 0;
  height: 115px;
  background: #fff;
  border-top: 1px solid #ddd;
  padding: 3px 0 0 9px;
`;
const DropItem = styled.div`
  height: 28px;
  display: flex;
  align-items: center;
  gap: 9px;
  color: ${(p) => (p.$off ? '#aaa' : '#333')};
`;

/* overlays */
const Pointer = styled.svg`
  position: absolute;
  left: 273px;
  top: 149px;
  z-index: 6;
`;
const Watermark = styled.div`
  position: absolute;
  left: 1497px;
  top: 983px;
  width: 155px;
  height: 50px;
  z-index: 7;
`;
const MarkSwirl = styled.svg`
  position: absolute;
  left: 0;
  top: 0;
`;
const MarkName = styled.div`
  position: absolute;
  left: 44px;
  top: 0;
  font-size: 20px;
  line-height: 26px;
  font-weight: 700;
  letter-spacing: 1px;
  white-space: nowrap;
  color: #3f8ed0;
`;
const MarkUrl = styled.div`
  position: absolute;
  left: 45px;
  top: 26px;
  font-size: 17px;
  line-height: 20px;
  font-weight: 600;
  white-space: nowrap;
  color: #62c083;
`;

const lines = (x, w, y, count, pitch, seed, redLine) => {
  const out = [];
  for (let i = 0; i < count; i++) {
    const s = (seed + i * 7) % 11;
    const len = i % 5 === 4 ? w * 0.55 : w - (s % 3) * 2;
    const indent = i % 5 === 0 ? 6 : 0;
    out.push(
      <path
        key={i}
        d={`M${x + indent} ${y + i * pitch}h${len - indent}`}
        stroke={i === redLine ? '#d86060' : '#777b84'}
        strokeWidth="0.9"
        strokeDasharray={`${2 + (s % 3)} 0.8 ${1 + (s % 2)} 0.6`}
      />,
    );
  }
  return out;
};

const Page4Art = () => (
  <svg width="129" height="143" viewBox="0 0 129 143">
    <defs>
      <linearGradient id="lake" x1="0" y1="0" x2="0" y2="1">
        <stop offset="0" stopColor="#9fc2dc" />
        <stop offset="0.45" stopColor="#33607f" />
        <stop offset="1" stopColor="#1d6a9c" />
      </linearGradient>
    </defs>
    {lines(20, 90, 1, 7, 3.400, 3, 0)}
    <rect x="47" y="26" width="40" height="20" fill="url(#lake)" />
    {lines(20, 90, 56, 15, 3.400, 5)}
    {lines(25, 28, 108, 7, 3.400, 2)}
    <path d="M62 132h6" stroke="#777" />
  </svg>
);
const Page5Art = () => {
  const rowsA = [0, 1, 2, 3, 4, 5, 6];
  const rowsB = [0, 1, 2, 3, 4, 5];
  return (
    <svg width="128" height="184" viewBox="0 0 128 184" stroke="#000">
      {rowsA.map((r) => <path key={r} d={`M27 ${18 + r * 9}h74`} />)}
      {[0, 1, 2, 3, 4].map((c) => <path key={c} d={`M${27 + c * 18.500} 18v54`} />)}
      {rowsB.map((r) => <path key={r} d={`M14 ${85 + r * 9}h100`} />)}
      {[0, 1, 2, 3, 4].map((c) => <path key={c} d={`M${14 + c * 25} 85v53`} />)}
      {rowsA.slice(0, 6).map((r) => (
        <path key={r} d={`M34 ${22.500 + r * 9}h${r ? 2 : 5}M52 ${22.500 + r * 9}h5`} stroke={r ? '#999' : '#222'} />
      ))}
      {rowsB.slice(0, 5).map((r) => (
        <path key={r} d={`M24 ${89.500 + r * 9}h3`} stroke="#c99" />
      ))}
      <path d="M64 172h6" stroke="#777" />
    </svg>
  );
};
const Page6Art = () => (
  <svg width="129" height="184" viewBox="0 0 129 184">
    {lines(20, 92, 18, 23, 3.400, 7, 0)}
    <path d="M22 104h6" stroke="#d33" />
    <path d="M30 118c0-4 6-5 9-6 4-4 10-4 14-3 5-2 12-2 16 0 6-1 14 0 18 3 6 1 9 4 8 8 2 4-3 7-8 7-4 3-10 3-15 2-5 2-12 2-17 0-5 2-11 1-14-2-6 0-11-4-11-9z" fill="#3e6bc0" />
    <rect x="43" y="113" width="27" height="5" fill="none" stroke="#000" />
    <path d="M62 172h6" stroke="#777" />
  </svg>
);

const FORM_LABELS = ['供方:', '代表:', '地址:', '电话:', '开户银行:', '账号:'];
const FormPreview = () => (
  <FormSplit>
    {[0, 1].map((c) => (
      <FormCol key={c} $line={c === 0}>
        {FORM_LABELS.map((t) => <FormLine key={t}>{t}</FormLine>)}
      </FormCol>
    ))}
  </FormSplit>
);
const DARK_ROWS = [[797, 775, 516, ''], [289, 841, 237, ''], [545, 175, 604, ''], [884, 140, 781, '']];
const DarkPreview = () => (
  <MiniGrid $cols="52px 47px 47px 1fr" $rows="16.800px">
    {['休闲', '射击', '', ''].map((t, i) => <MiniCell key={i} $bg="#7da24f" $c="#c5d6a8" $size={7} $vline="#8fb163">{t}</MiniCell>)}
    {DARK_ROWS.flat().map((n, i) => <MiniCell key={i} $bg="#232326" $c="#8a8a8a" $size={7} $vline="#3d3d40">{n}</MiniCell>)}
  </MiniGrid>
);
const SODA_ROWS = [[555, 278, 182], [303, 402, 522], [424, 163, 364], [420, 357, 170]];
const SodaPreview = () => (
  <MiniGrid $cols="1fr 1fr 1fr" $head="20px" $rows="12.800px">
    {['可乐', '雪碧', '橙汁'].map((t) => <MiniCell key={t} $c="#6ba7e3" $size={8} $under="#aaa">{t}</MiniCell>)}
    {SODA_ROWS.flat().map((n, i) => <MiniCell key={i} $c="#777" $size={7} $bg={(i > 2 && i < 6) || i > 8 ? '#f3f3f3' : '#fff'}>{n}</MiniCell>)}
    {[2494, 1878, 1860].map((n) => <MiniCell key={n} $bg="#0565c5" $c="#d6e6f6" $size={7}>{n}</MiniCell>)}
  </MiniGrid>
);
const LEAVE_LINE = '#c4c4c4';
const LeavePreview = () => (
  <MiniGrid $cols="39px 19px 19px 11px 18px 5px 22px 3px 1fr" $rows="14px">
    <MiniCell $span={4} $line={LEAVE_LINE} $b>请 假 单</MiniCell>
    <MiniCell $line={LEAVE_LINE}>姓名</MiniCell><MiniCell $span={2} $line={LEAVE_LINE} />
    <MiniCell $span={2} $line={LEAVE_LINE}>部门</MiniCell>
    <MiniCell $line={LEAVE_LINE} $b>类别</MiniCell><MiniCell $span={8} $line={LEAVE_LINE} $size={5}>□事假 □病假 □婚假 □丧假 □产假 □年假</MiniCell>
    <MiniCell $line={LEAVE_LINE} $b>事由</MiniCell><MiniCell $span={8} $line={LEAVE_LINE} />
    <MiniCell $line={LEAVE_LINE} $b>期限</MiniCell><MiniCell $span={8} $line={LEAVE_LINE} $size={5}>自　年　月　日　时至　年　月　日</MiniCell>
    <MiniCell $line={LEAVE_LINE} $b $size={5}>职务代理人</MiniCell><MiniCell $span={8} $line={LEAVE_LINE} $align="flex-start">(本栏必填)</MiniCell>
    <MiniCell $line={LEAVE_LINE} $b>部门经理</MiniCell><MiniCell $line={LEAVE_LINE} /><MiniCell $line={LEAVE_LINE}>总裁</MiniCell>
    <MiniCell $span={3} $line={LEAVE_LINE} /><MiniCell $span={2} $line={LEAVE_LINE}>总经理</MiniCell><MiniCell $line={LEAVE_LINE} />
  </MiniGrid>
);
const WATER_LINE = '#8c8c8c';
const WaterPreview = () => (
  <MiniGrid $cols="30px 30px 30px 31px 1fr" $head="37px 29px" $rows="19px">
    {['饮 用\n水 类\n型', '桶 装\n水', '直 饮\n水', 'X²', ''].map((t, i) => (
      <WaterHead key={i} $c="#a9c16f" $size={8} $line={WATER_LINE}>{t}</WaterHead>
    ))}
    {['合 格\n数', 50, 50, 5, 6].map((t, i) => (
      <WaterHead key={i} $bg="#9db95d" $c="#4f5c2d" $size={8} $line={WATER_LINE}>{t}</WaterHead>
    ))}
    {['总数', 100, 100, '', ''].map((t, i) => (
      <MiniCell key={i} $c="#777" $size={7} $line={WATER_LINE} $align="flex-start">{t}</MiniCell>
    ))}
  </MiniGrid>
);
const PALE_LINE = '#ececec';
const ComparePreview = () => (
  <>
    <MiniTitle $h={17}>竞争分析作业表</MiniTitle>
    <MiniGrid $c="#aaa" $cols="47px 43px 18px 1fr" $rows="8px">
      <MiniCell $rspan={2} $line={PALE_LINE} $size={4}>分析</MiniCell>
      <MiniCell $span={3} $line={PALE_LINE} $size={4}>优势及对比</MiniCell>
      <MiniCell $line={PALE_LINE} $size={4}>目标</MiniCell><MiniCell $line={PALE_LINE} $size={4}>对比</MiniCell><MiniCell $line={PALE_LINE} $size={4}>目标</MiniCell>
      <MiniCell $span={4} $line={PALE_LINE} $align="flex-start" $size={4}>竞争优势</MiniCell>
      {['1. 是否竞争', '2. 对于用户是否看重', '3. 是否明确', '4. 是否对是否有用'].map((t) => (
        <React.Fragment key={t}>
          <MiniCell $line={PALE_LINE} $size={4}>{t}</MiniCell>
          <MiniCell $line={PALE_LINE} /><MiniCell $line={PALE_LINE} /><MiniCell $line={PALE_LINE} />
        </React.Fragment>
      ))}
    </MiniGrid>
  </>
);
const BudgetPreview = () => (
  <>
    <MiniTitle $h={8} $strong>产品费用预算表</MiniTitle>
    <MiniGrid $cols="19px 19px 16px 16px 16px 16px 16px 16px 1fr" $rows="4.700px">
      {Array.from({ length: 135 }, (_, i) => (
        <MiniCell key={i} $line={i % 9 < 2 ? '#b4b4b4' : '#cccccc'} />
      ))}
    </MiniGrid>
  </>
);
const TOOLS = [['螺丝', 42], ['扳手', 22], ['十字批', 55], ['一字批', 78], ['头盔', 90]];
const ToolsPreview = () => (
  <MiniGrid $cols="72px 1fr" $rows="17px">
    {TOOLS.map(([t, n], i) => (
      <React.Fragment key={t}>
        <ToolName $bg={i % 2 ? '#a9c07b' : '#85a64b'} $c="#d9e4c2" $size={9} $align="flex-start">{t}</ToolName>
        <MiniCell $bg={i % 2 ? '#f1f1f1' : '#fff'} $c="#999" $size={9}>{n}</MiniCell>
      </React.Fragment>
    ))}
  </MiniGrid>
);
const LoanPreview = () => (
  <>
    <MiniTitle $h={13} $gap={4}>分期偿款计划</MiniTitle>
    <MiniGrid $cols="25px 25px 25px 25px 25px 1fr" $rows="10.500px">
      {['日期', '金额', '利率', '月息', '日息', ''].map((t, i) => <MiniCell key={i} $line="#ccc" $size={4.500} $rspan={2}>{t}</MiniCell>)}
      {Array.from({ length: 30 }, (_, i) => <MiniCell key={i} $line="#d4d4d4" />)}
    </MiniGrid>
  </>
);

const TEMPLATES = [
  { name: '供房信息', art: <FormPreview /> },
  { name: '游戏类型深色背景表格样式', art: <DarkPreview />, free: true, bg: '#232326' },
  { name: '突出总计表格样式饮料', art: <SodaPreview /> },
  { name: '员工请假单', art: <LeavePreview /> },
  { name: '饮用水', art: <WaterPreview />, free: true },
  { name: '竞争分析作业表', art: <ComparePreview /> },
  { name: '产品费用预算', art: <BudgetPreview /> },
  { name: '凹凸感表格样式工具', art: <ToolsPreview />, free: true },
  { name: '企业合同', art: <LoanPreview />, free: true },
];

const T1 = [[1, '张三', '男', 18], [2, '李四', '男', 19], [3, '王五', '女', 18], [4, '赵六', '男', 19], [5, '吴七', '男', 20]];
const T2 = [[1, '郑八', '女', 20], [2, '杨九', '女', 20], [3], [4], [5]];
const H_NUMS = [];
for (let n = 2; n <= 34; n += 2) H_NUMS.push(n);

export default function App() {
  return (
    <>
      <GlobalStyle />
      <Shell>
        <TabBar>
          <HomeTab>首页</HomeTab>
          <Tab $w={125}><AppBadge $bg="#ee3b3b"><Ico name="leaf" size={14} color="#fff" box="0 0 14 14" stroke={1.4} /></AppBadge>找稻壳模板</Tab>
          <Tab $w={250} $active><AppBadge $bg="#2a7ff0">W</AppBadge>Word教程2.docx<TabSpacer /><PinBox $gap={6} /><Close>✕</Close></Tab>
          <Tab $w={250}><AppBadge $bg="#1fb254">S</AppBadge>工作簿3.xlsx<TabSpacer /><PinBox $gap={6} /><Dot /></Tab>
          <Tab $w={251}><AppBadge $bg="#f5781e">P</AppBadge>WPS PPT教程.pptx<TabSpacer /><PinBox $gap={25} /></Tab>
          <AddTab><Plus size={18} strokeWidth={1.8} /></AddTab>
          <WinArea>
            <Ico name="dual" size={23} color="#5b6478" />
            <Gap $w={14} />
            <Ico name="apps" size={16} color="#5b6478" />
            <LoginBtn>立即登录<Avatar /></LoginBtn>
            <WinSep />
            <WinBtn $h={1} $line />
            <WinBtn $h={11} />
            <Close $c="#a6aab4" $w={12}>✕</Close>
          </WinArea>
        </TabBar>

        <MenuRow>
          <Burger />
          <span>文件</span>
          <RowSep $m="0 9px 0 11px" />
          <QuickIcons>
            <Ico name="save" size={16} box="0 0 16 16" />
            <Ico name="saveas" size={16} box="0 0 16 16" />
            <Printer size={16} strokeWidth={1} color={INK} />
            <Ico name="preview" size={16} box="0 0 16 16" />
            <Undo2 size={15} strokeWidth={1} color={INK} />
          </QuickIcons>
          <Caret $m={5} />
          <Gap $w={9} />
          <Redo2 size={15} strokeWidth={1} color="#b0b4bc" />
          <Gap $w={14} />
          <Caret $m={0} />
          <RowSep $m="0 0 0 9px" />
          <NavList>
            <NavItem>开始</NavItem>
            <NavItem $active>插入</NavItem>
            <NavItem>页面布局</NavItem>
            <NavItem>引用</NavItem>
            <NavItem>审阅</NavItem>
            <NavItem>视图</NavItem>
            <NavItem>章节</NavItem>
            <NavItem $extra={3}>开发工具</NavItem>
            <NavItem $extra={2}>会员专享</NavItem>
          </NavList>
          <SearchHint><Search size={14} strokeWidth={1.2} color="#8a90a0" />查找命令、搜索模板</SearchHint>
          <RightTools>
            <ToolText $m={11}><Ico name="cloud" size={16} />未上云</ToolText>
            <ToolText $m={12}><Ico name="people" size={16} />协作</ToolText>
            <ShareBtn><Ico name="share" size={15} color="#fff" />分享</ShareBtn>
            <RowSep $m="0 17px 0 15px" />
            <Kebab />
            <Ico name="collapse" size={15} />
          </RightTools>
        </MenuRow>

        <Ribbon>
          <Group>
            <Btn icon="cover" label="封面页" caret />
            <Btn icon="blank" label="空白页" caret />
            <Btn icon="pagebreak" label="分页" caret />
          </Group>
          <Group $l={6} $r={5}>
            <Btn icon="table" label="表格" caret on w={43} />
          </Group>
          <Group $l={10} $r={9}>
            <Btn icon="picture" label="图片" caret />
            <Btn icon="shape" label="形状" caret />
            <Btn icon="iconset" label="图标" caret />
            <SideCol>
              <Side icon="chart" label="图表" />
              <Side icon="smart" label="智能图形" />
            </SideCol>
          </Group>
          <Group $l={8} $gap={13}>
            <Btn icon="shop" label="稻壳资源" />
            <Btn icon="flow" label="在线流程图" />
            <Btn icon="mind" label="在线脑图" />
            <Btn icon="more" label="更多" caret />
          </Group>
          <Group>
            <Btn icon="comment" label="批注" />
          </Group>
          <Group $gap={11}>
            <Btn icon="header" label="页眉页脚" />
            <Btn icon="pagenum" label="页码" caret />
            <Btn icon="watermark" label="水印" caret />
          </Group>
          <Group $gap={11} $l={12} $r={6}>
            <Btn icon="textbox" label="文本框" caret />
            <Btn icon="art" label="艺术字" caret />
            <Btn icon="date" label="日期" />
            <SideCol $ml={-2}>
              <Side icon="object" label="对象" caret />
              <SideItem><Paperclip size={16} strokeWidth={1} color={INK} />附件</SideItem>
            </SideCol>
            <SideCol $ml={-3}>
              <Side icon="dropcap" label="首字下沉" off />
              <Side icon="docpart" label="文档部件" caret />
            </SideCol>
          </Group>
          <Group>
            <Btn icon="omega" label="符号" caret />
            <Btn icon="formula" label="公式" caret />
            <Btn icon="numbering" label="编号" />
          </Group>
          <Group $gap={9}>
            <Btn icon="link" label="超链接" />
            <SideCol>
              <Side icon="crossref" label="交叉引用" />
              <Side icon="mark" label="书签" />
            </SideCol>
          </Group>
          <Group>
            <Btn icon="form" label="窗体" caret />
            <Btn icon="folderstar" label="资源夹" />
          </Group>
          <Group>
            <Btn icon="teach" label="教学工具" />
          </Group>
        </Ribbon>

        <Main>
          <LeftRail>
            <RailBtn><Ico name="listdoc" size={18} /></RailBtn>
            <RailBtn $on><Ico name="section" size={20} /></RailBtn>
            <RailBtn><Bookmark size={20} strokeWidth={1} color={INK} /></RailBtn>
            <RailBtn><Search size={20} strokeWidth={1} color={INK} /></RailBtn>
          </LeftRail>
          <SidePanel>
            <PanelTitle>章节</PanelTitle>
            <PanelTools>
              <SquareBtn><ChevronDown size={10} strokeWidth={1.2} /></SquareBtn>
              <SquareBtn><ChevronUp size={10} strokeWidth={1.2} /></SquareBtn>
              <SquareBtn><Plus size={9} strokeWidth={1.2} /></SquareBtn>
              <SquareBtn><Minus size={9} strokeWidth={1.2} /></SquareBtn>
            </PanelTools>
            <PanelRule />
            <SectionRow><Arrow />第 1 节: 未命名</SectionRow>
            <SectionRow><Arrow />第 2 节: 未命名</SectionRow>
            <SectionRow><Arrow />第 3 节: 未命名</SectionRow>
            <SectionRow $active><ArrowOpen />第 4 节: 未命名</SectionRow>
            <ThumbBox>
              <ThumbPage $h={144} $open><Page4Art /></ThumbPage>
              <ThumbNo $h={27}>4</ThumbNo>
              <ThumbPage $h={188} $on><Page5Art /></ThumbPage>
              <ThumbNo $h={28}>5</ThumbNo>
              <ThumbPage $h={186}><Page6Art /></ThumbPage>
              <ThumbNo $h={20}>6</ThumbNo>
              <ThumbScroll />
            </ThumbBox>
            <SectionRow><Arrow />第 5 节: 未命名<Caret $push $c="#8d94a6" /></SectionRow>
            <SectionRow><Arrow />第 6 节: 未命名<Caret $push $c="#8d94a6" /></SectionRow>
          </SidePanel>
          <VRuler>
            <VBand>
              {[36, 38, 40, 42].map((n) => (
                <VBlock key={n} $last={n === 42}><span>{n}</span></VBlock>
              ))}
            </VBand>
          </VRuler>
          <Workspace>
            <HRuler>
              <RulerSeg $w={107} $pad={64} $bg="#f0f1f4"><RulerNo>2</RulerNo></RulerSeg>
              <RulerSeg $w={499} $pad={13} $bg="#e3e6ec">
                {H_NUMS.map((n) => <RulerNo key={n}>{n}</RulerNo>)}
              </RulerSeg>
              <RulerSeg $w={109} $pad={4} $bg="#f0f1f4">
                {[36, 38, 40].map((n) => <RulerNo key={n}>{n}</RulerNo>)}
              </RulerSeg>
              <RulerMark $x={385} width="12" height="24" viewBox="0 0 12 24">
                <path d="M1.500 1h9L6 8zM6 8l4.500 7h-9zM1.500 15h9v8h-9z" fill="#fff" />
              </RulerMark>
              <RulerMark $x={884} width="12" height="24" viewBox="0 0 12 24">
                <path d="M6 0v12M6 12l4.500 7h-9z" fill="#fff" />
              </RulerMark>
            </HRuler>
            <DocScroll>
              <Page>
                <CropMark $x={87} />
                <CropMark $x={605} $right />
                <TableBlock $left={154} $w={406}>
                  <DocTable>
                    <tbody>
                      <tr>
                        {['编号', '姓名', '性别', '年龄'].map((t) => <DocCell key={t} $cn $b>{t}</DocCell>)}
                      </tr>
                      {T1.map((r) => (
                        <tr key={r[0]}>
                          <DocCell $b>{r[0]}</DocCell>
                          <DocCell $cn>{r[1]}</DocCell>
                          <DocCell $cn>{r[2]}</DocCell>
                          <DocCell>{r[3]}</DocCell>
                        </tr>
                      ))}
                    </tbody>
                  </DocTable>
                  <Caption $gap={-1}>表格 1</Caption>
                </TableBlock>
                <TableBlock $top={59} $left={84} $w={548}>
                  <DocTable>
                    <tbody>
                      <tr>
                        <DocCell $cn>编号</DocCell>
                        <DocCell $cn $b>姓名</DocCell>
                        <DocCell $cn>性别</DocCell>
                        <DocCell $cn>年龄</DocCell>
                      </tr>
                      {T2.map((r) => (
                        <tr key={r[0]}>
                          <DocCell>{r[0]}</DocCell>
                          <DocCell $cn>{r[1]}</DocCell>
                          <DocCell $cn>{r[2]}</DocCell>
                          <DocCell>{r[3]}</DocCell>
                        </tr>
                      ))}
                    </tbody>
                  </DocTable>
                  <Caption $gap={16}>表格 2</Caption>
                </TableBlock>
              </Page>
              <FloatEject><Ico name="eject" size={15} color="#777" /></FloatEject>
              <FloatCard>
                <FloatIcon><Ico name="paper" size={20} color="#fff" /></FloatIcon>
                论文查重
              </FloatCard>
            </DocScroll>
          </Workspace>
          <VScroll>
            <VScrollTop><SplitBox /></VScrollTop>
            <ScrollArrow $m={7} />
            <ScrollThumb $m={547} />
            <ScrollArrow $m={171} $down />
            <ScrollArrow $m={11} />
            <ScrollRing $m={13} />
            <ScrollArrow $m={13} $down />
          </VScroll>
          <RightRail>
            <Grip />
            <RailIcon><Rocket size={19} strokeWidth={1} color="#5b6478" /></RailIcon>
            <RailIcon><Ico name="pen" size={18} /></RailIcon>
            <RailIcon><Ico name="pointer" size={19} /></RailIcon>
            <RailIcon><Ico name="sliders" size={18} /></RailIcon>
            <RailIcon><Ico name="shop" size={19} /></RailIcon>
            <RailIcon><Ico name="bulb" size={18} /></RailIcon>
            <RailIcon><Ico name="guide" size={19} /></RailIcon>
          </RightRail>
        </Main>

        <StatusBar>
          <StatusText>页面: 8/10</StatusText>
          <StatusSep $m="0 9px 0 5px" />
          <StatusText>字数: 2411</StatusText>
          <StatusSep $m="0 0 0 6px" />
          <StatusBtn $on $pl={4} $pr={2}><Ico name="spell" size={15} />拼写检查</StatusBtn>
          <Caret $m={3} />
          <StatusBtn $pl={11}><Ico name="inspect" size={16} />内容检查</StatusBtn>
          <Caret $m={3} />
          <StatusSep $m="0 16px 0 6px" />
          <StatusBtn $pl={0}><Ico name="missing" size={16} />缺失字体</StatusBtn>
          <StatusRight>
            <Eye size={18} strokeWidth={1} color={INK} />
            <StatusSep $m="0 10px 0 12px" />
            <ViewBtn $on><Ico name="viewdoc" size={16} /></ViewBtn>
            <Gap $w={2} />
            <ViewBtn $w={26}><Ico name="outline" size={15} /></ViewBtn>
            <ViewBtn $w={25}><BookOpen size={16} strokeWidth={1} color={INK} /></ViewBtn>
            <ViewBtn $w={26}><Globe size={16} strokeWidth={1} color={INK} /></ViewBtn>
            <ViewBtn $w={27}><Ico name="pen" size={16} /></ViewBtn>
            <StatusSep $m="0 14px 0 9px" />
            <Ico name="fit" size={15} />
            <Gap $w={8} />
            <StatusText>90%</StatusText>
            <Caret $m={6} />
            <Gap $w={13} />
            <Minus size={12} strokeWidth={1.6} color={INK} />
            <Slider><SliderKnob /></Slider>
            <Plus size={13} strokeWidth={1.6} color={INK} />
            <Gap $w={11} />
            <Ico name="expand" size={14} />
          </StatusRight>
        </StatusBar>

        <Dropdown>
          <DropHead>插入表格</DropHead>
          <CellGrid>
            {Array.from({ length: 192 }, (_, i) => <GridCell key={i} />)}
          </CellGrid>
          <Banner>
            <HexLogo />
            稻壳内容型表格
            <Feedback><MessageCircleMore size={15} strokeWidth={1.1} color="#555" />反馈</Feedback>
          </Banner>
          <CatRow>
            <CatPill>推荐</CatPill>
            <Cat>活动策划</Cat>
            <Cat>营销策划</Cat>
            <Cat>计划总结</Cat>
            <Cat>财务管理</Cat>
            <Cat>创业计划书</Cat>
            <CatOther>其他<Burger $s={10} $c="#777" $m={0} /></CatOther>
          </CatRow>
          <TemplateArea>
            <TemplateGrid>
              {TEMPLATES.map((t) => (
                <Template key={t.name}>
                  <Thumb $bg={t.bg}>
                    {t.art}
                    {t.free && <FreeTag>免费</FreeTag>}
                  </Thumb>
                  <TemplateName>{t.name}</TemplateName>
                </Template>
              ))}
            </TemplateGrid>
            <TemplateScroll />
          </TemplateArea>
          <DropFooter>
            <DropItem><Ico name="insert" size={16} />插入表格(I)</DropItem>
            <DropItem><Ico name="draw" size={16} />绘制表格(W)</DropItem>
            <DropItem $off><Ico name="text2table" size={16} color="#aaa" />文本转换成表格...</DropItem>
            <DropItem $off><Ico name="table2text" size={16} color="#aaa" />表格转换成文本...</DropItem>
          </DropFooter>
        </Dropdown>

        <Pointer width="16" height="22" viewBox="0 0 16 22">
          <path d="M1.500 1v16l4-3.500 3 6.500 2.500-1-3-6.300h5.500z" fill="#fff" stroke="#333" />
        </Pointer>

        <Watermark>
          <MarkSwirl width="50" height="50" viewBox="0 0 50 50" fill="none">
            <path d="M46 2C28 3 8 12 3 27c-2 8 3 14 8 16-5-6-4-14 4-21C24 14 36 8 46 2z" fill="#6fb6e8" opacity="0.9" />
            <path d="M37 21c-9-5-22-1-24 9-1 7 7 13 16 10-7 0-11-4-10-9 2-6 10-9 18-10z" fill="#7cc47a" opacity="0.9" />
            <path d="M36 20c1 8-6 16-16 14 6 0 10-3 11-8 1-3 2-5 5-6z" fill="#4f8fd2" opacity="0.85" />
          </MarkSwirl>
          <MarkName>极光下载站</MarkName>
          <MarkUrl>www.xz7.com</MarkUrl>
        </Watermark>
      </Shell>
    </>
  );
}
